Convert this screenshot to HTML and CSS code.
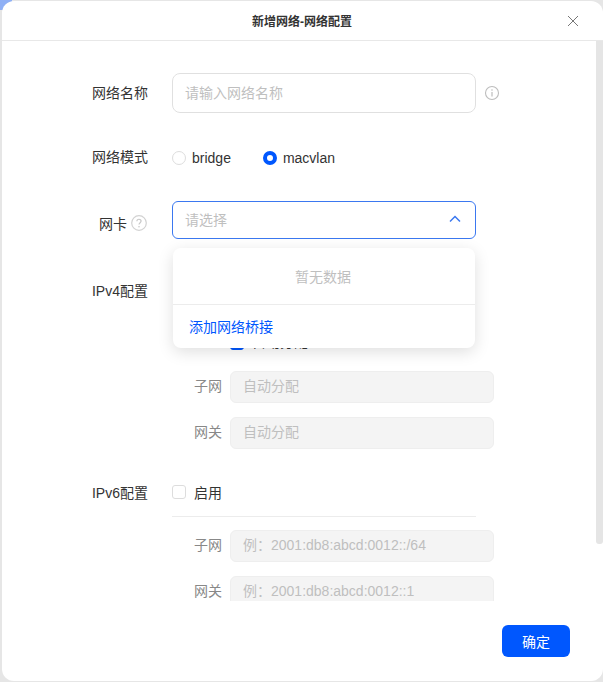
FILE: index.html
```html
<!DOCTYPE html>
<html lang="zh-CN">
<head>
    <meta charset="UTF-8">
    <title>新增网络-网络配置</title>
    <link rel="stylesheet" href="styles.css">
</head>
<body>
    <div class="corner"></div>
    <div class="dialog">
        <div class="dialog-header">
            <span class="dialog-title">新增网络-网络配置</span>
            <svg class="close-icon" width="12" height="12" viewBox="0 0 12 12"><path d="M1 1L11 11M11 1L1 11" fill="none" stroke="#777" stroke-width="1"/></svg>
        </div>

        <div class="dialog-body">
            <div class="form-item">
                <label class="form-label">网络名称</label>
                <div class="text-input"><span class="placeholder">请输入网络名称</span></div>
                <svg class="info-icon" width="16" height="16" viewBox="0 0 16 16"><circle cx="8" cy="8" r="6.5" fill="none" stroke="#bdbdbd" stroke-width="1.1"/><path d="M8 7V11.5" stroke="#bdbdbd" stroke-width="1.2"/><circle cx="8" cy="5" r="0.8" fill="#bdbdbd"/></svg>
            </div>

            <div class="form-item mode-item">
                <label class="form-label">网络模式</label>
                <div class="radio-group">
                    <span class="radio"></span><span class="radio-text">bridge</span>
                    <span class="radio checked"></span><span class="radio-text">macvlan</span>
                </div>
            </div>

            <div class="form-item nic-item">
                <label class="form-label">网卡<svg class="help-icon" width="16" height="16" viewBox="0 0 16 16"><circle cx="8" cy="8" r="7.3" fill="none" stroke="#d2d2d2" stroke-width="1.2"/><path d="M5.9 6.2C5.9 3.6 10.1 3.6 10.1 6.1C10.1 7.7 8 7.7 8 9.6" fill="none" stroke="#c8c8c8" stroke-width="1.2"/><circle cx="8" cy="11.7" r="0.8" fill="#c8c8c8"/></svg></label>
                <div class="select-wrap">
                    <div class="select-box">
                        <span class="placeholder">请选择</span>
                        <svg width="12" height="8" viewBox="0 0 12 8"><path d="M1 6.5L6 1.5L11 6.5" fill="none" stroke="#3b78f0" stroke-width="1.5"/></svg>
                    </div>
                    <div class="dropdown">
                        <div class="dropdown-empty">暂无数据</div>
                        <div class="dropdown-action">添加网络桥接</div>
                    </div>
                </div>
            </div>

            <div class="form-item ipv4-item">
                <label class="form-label">IPv4配置</label>
            </div>
            <div class="auto-row">
                <span class="checkbox checked"></span><span class="auto-text">自动分配</span>
                <svg width="8" height="16" viewBox="0 0 8 16"><circle cx="4" cy="8" r="3.5" fill="none" stroke="#ccc"/></svg>
            </div>
            <div class="sub-row">
                <span class="sub-label">子网</span>
                <div class="disabled-input">自动分配</div>
            </div>
            <div class="sub-row">
                <span class="sub-label">网关</span>
                <div class="disabled-input">自动分配</div>
            </div>

            <div class="form-item ipv6-item">
                <label class="form-label">IPv6配置</label>
                <span class="checkbox"></span><span class="check-text">启用</span>
            </div>
            <div class="divider"></div>
            <div class="sub-row">
                <span class="sub-label">子网</span>
                <div class="disabled-input">例：2001:db8:abcd:0012::/64</div>
            </div>
            <div class="sub-row">
                <span class="sub-label">网关</span>
                <div class="disabled-input">例：2001:db8:abcd:0012::1</div>
            </div>

            <div class="scroll-thumb"></div>
        </div>

        <div class="dialog-footer">
            <button class="ok-button">确定</button>
        </div>
    </div>
</body>
</html>
```

FILE: styles.css
```css
* {
    box-sizing: border-box;
}

html,
body {
    margin: 0;
    height: 100%;
    overflow: hidden;
}

body {
    position: relative;
    background-color: #e6e6e6;
    padding: 1px 0 1px 2px;
    font-family: "Liberation Sans", "Noto Sans CJK SC", sans-serif;
    font-size: 14px;
    color: #333;
}

/* bit of the page behind the dialog */
.corner {
    position: absolute;
    top: 0;
    left: 0;
    width: 12px;
    height: 10px;
    background-color: #8fb0f5;
}

.dialog {
    position: relative;
    display: flex;
    flex-direction: column;
    height: 680px;
    background-color: #fff;
    border-radius: 12px;
    overflow: hidden;
}

.dialog-header {
    display: flex;
    align-items: center;
    justify-content: center;
    position: relative;
    flex: none;
    height: 40px;
    border-bottom: 1px solid #e8e8e8;
}

.dialog-title {
    margin-right: 1px;
    font-size: 12px;
    font-weight: 700;
    color: #333;
}

.close-icon {
    position: absolute;
    top: 14px;
    right: 24px;
}

.dialog-body {
    position: relative;
    flex: none;
    height: 560px;
    padding-top: 32px;
    overflow: hidden;
}

.scroll-thumb {
    position: absolute;
    top: 0;
    right: 0;
    width: 7px;
    height: 503px;
    background-color: #e5e5e5;
    border-radius: 0 0 3px 3px;
}

.form-item {
    display: flex;
    align-items: center;
    height: 40px;
}

.form-label {
    display: flex;
    align-items: center;
    justify-content: flex-end;
    flex: none;
    width: 146px;
    margin-right: 24px;
    padding-bottom: 2px;
    white-space: nowrap;
}

.help-icon {
    margin-left: 4px;
    margin-right: 1px;
}

.text-input {
    display: flex;
    align-items: center;
    width: 304px;
    height: 40px;
    padding: 0 12px 2px;
    border: 1px solid #e0e0e0;
    border-radius: 8px;
}

.placeholder {
    color: #bfbfbf;
}

.info-icon {
    margin-left: 8px;
}

.mode-item {
    margin-top: 25px;
}

.mode-item .form-label {
    padding-bottom: 4px;
}

.radio-group {
    display: flex;
    align-items: center;
}

.radio {
    width: 14px;
    height: 14px;
    border: 1px solid #ddd;
    border-radius: 50%;
}

.radio.checked {
    border: 4px solid #0057fe;
}

.radio-text {
    margin-left: 6px;
    margin-right: 32px;
}

.nic-item {
    align-items: flex-start;
    height: 46px;
    margin-top: 23px;
    margin-bottom: 23px;
}

.nic-item .form-label {
    height: 46px;
}

.select-wrap {
    position: relative;
}

.select-box {
    display: flex;
    align-items: center;
    justify-content: space-between;
    width: 304px;
    height: 38px;
    padding: 0 14px 2px 12px;
    border: 1px solid #3b78f0;
    border-radius: 6px;
}

.dropdown {
    position: absolute;
    top: 47px;
    left: 1px;
    z-index: 2;
    width: 302px;
    height: 100px;
    background-color: #fff;
    border-radius: 8px;
    box-shadow: 0 4px 16px rgba(0, 0, 0, 0.13);
}

.dropdown-empty {
    height: 57px;
    padding-right: 2px;
    line-height: 58px;
    text-align: center;
    color: #bfbfbf;
    border-bottom: 1px solid #ececec;
}

.dropdown-action {
    height: 43px;
    line-height: 45px;
    padding-left: 16px;
    color: #0057fe;
}

.checkbox {
    width: 14px;
    height: 14px;
    border: 1px solid #ddd;
    border-radius: 3px;
}

.checkbox.checked {
    background-color: #0057fe;
    border-color: #0057fe;
}

.check-text {
    margin-left: 8px;
}

.divider {
    width: 304px;
    height: 1px;
    margin: 4px 0 13px 170px;
    background-color: #ececec;
}

.auto-row {
    display: flex;
    align-items: center;
    height: 30px;
    margin: 18px 0 13px 228px;
}

.auto-text {
    margin-left: 8px;
    margin-right: 8px;
    padding-bottom: 4px;
}

.sub-row {
    display: flex;
    align-items: center;
    height: 32px;
    margin-bottom: 14px;
    margin-left: 170px;
}

.sub-label {
    width: 50px;
    margin-right: 8px;
    padding-bottom: 4px;
    text-align: right;
    color: #888;
}

.disabled-input {
    width: 264px;
    height: 32px;
    line-height: 29px;
    padding: 0 12px;
    background-color: #f4f4f4;
    border: 1px solid #eee;
    border-radius: 6px;
    color: #bfbfbf;
}

.ipv6-item {
    margin-top: 23px;
}

.ipv4-item .form-label,
.ipv6-item .form-label {
    padding-bottom: 0;
}

.dialog-footer {
    display: flex;
    justify-content: flex-end;
    flex: none;
    padding: 24px 33px 0 0;
}

.ok-button {
    width: 68px;
    height: 32px;
    padding: 0;
    background-color: #0057fe;
    color: #fff;
    border: none;
    border-radius: 6px;
    font-family: inherit;
    font-size: 14px;
}
```
